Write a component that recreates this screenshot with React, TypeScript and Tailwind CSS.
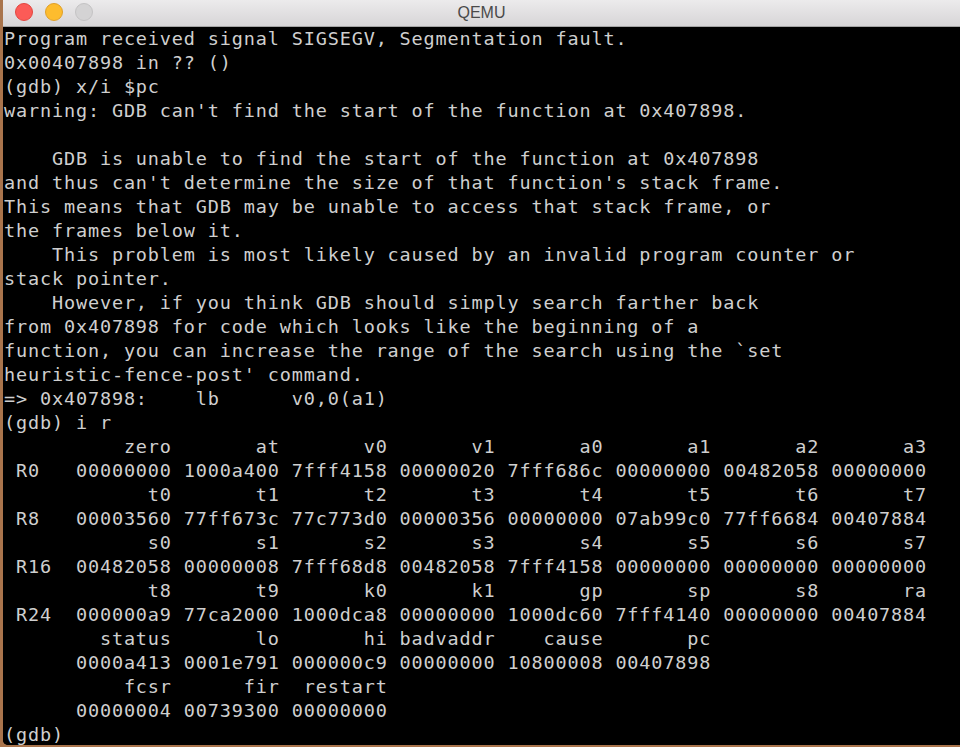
import React from "react";

const pad = (s: string, n: number) => s.padStart(n, " ");

const regRows: [string, string[], string[]][] = [
  ["R0", ["zero", "at", "v0", "v1", "a0", "a1", "a2", "a3"], ["00000000", "1000a400", "7fff4158", "00000020", "7fff686c", "00000000", "00482058", "00000000"]],
  ["R8", ["t0", "t1", "t2", "t3", "t4", "t5", "t6", "t7"], ["00003560", "77ff673c", "77c773d0", "00000356", "00000000", "07ab99c0", "77ff6684", "00407884"]],
  ["R16", ["s0", "s1", "s2", "s3", "s4", "s5", "s6", "s7"], ["00482058", "00000008", "7fff68d8", "00482058", "7fff4158", "00000000", "00000000", "00000000"]],
  ["R24", ["t8", "t9", "k0", "k1", "gp", "sp", "s8", "ra"], ["000000a9", "77ca2000", "1000dca8", "00000000", "1000dc60", "7fff4140", "00000000", "00407884"]],
  ["", ["status", "lo", "hi", "badvaddr", "cause", "pc"], ["0000a413", "0001e791", "000000c9", "00000000", "10800008", "00407898"]],
  ["", ["fcsr", "fir", "restart"], ["00000004", "00739300", "00000000"]],
];

const regLines: string[] = [];
regRows.forEach(([label, names, vals]) => {
  regLines.push("      " + names.map((n) => pad(n, 8)).join(" "));
  regLines.push((label ? (" " + label).padEnd(6, " ") : "      ") + vals.join(" "));
});

const lines: string[] = [
  "Program received signal SIGSEGV, Segmentation fault.",
  "0x00407898 in ?? ()",
  "(gdb) x/i $pc",
  "warning: GDB can't find the start of the function at 0x407898.",
  "",
  "    GDB is unable to find the start of the function at 0x407898",
  "and thus can't determine the size of that function's stack frame.",
  "This means that GDB may be unable to access that stack frame, or",
  "the frames below it.",
  "    This problem is most likely caused by an invalid program counter or",
  "stack pointer.",
  "    However, if you think GDB should simply search farther back",
  "from 0x407898 for code which looks like the beginning of a",
  "function, you can increase the range of the search using the `set",
  "heuristic-fence-post' command.",
  "=> 0x407898:    lb      v0,0(a1)",
  "(gdb) i r",
  ...regLines,
  "(gdb)",
];

export default function App() {
  return (
    <div className="w-[960px] h-[747px] bg-[#a9744c] overflow-hidden">
      <div className="ml-[3px] w-[957px] h-[745px] flex flex-col overflow-hidden rounded-bl-[5px] bg-black">
        <div className="relative h-[27px] shrink-0 bg-gradient-to-b from-[#ecebec] to-[#d7d5d7] border-b border-[#a4a4a4] flex items-center justify-center">
          <div className="absolute left-[12px] top-[3px] flex gap-[12px]">
            <div className="w-[18px] h-[18px] rounded-full bg-[#fc5b57] border border-[#e2463f]" />
            <div className="w-[18px] h-[18px] rounded-full bg-[#fdbc2e] border border-[#e0a028]" />
            <div className="w-[18px] h-[18px] rounded-full bg-[#d4d3d4] border border-[#c4c3c4]" />
          </div>
          <span className="text-[16px] text-[#4a4a4a] font-['Liberation_Sans',Arial,sans-serif]">QEMU</span>
        </div>
        <div className="flex-1 bg-black pl-[1px] pt-0">
          {lines.map((l, i) => (
            <div
              key={i}
              className="h-[24px] leading-[24px] whitespace-pre text-[18.5px] tracking-[0.85px] text-[#cfcfcf] font-['DejaVu_Sans_Mono',monospace]"
            >
              {l || " "}
            </div>
          ))}
        </div>
      </div>
    </div>
  );
}
